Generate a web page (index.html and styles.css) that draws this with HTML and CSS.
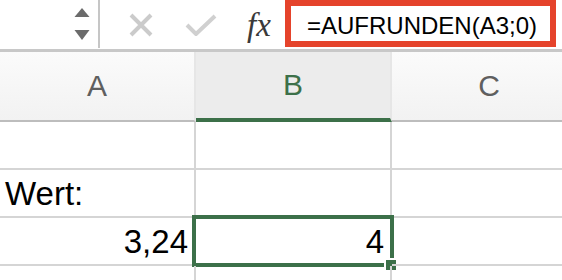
FILE: index.html
```html
<!DOCTYPE html>
<html lang="de">
<head>
    <meta charset="UTF-8">
    <meta name="viewport" content="width=device-width, initial-scale=1.0">
    <title>AUFRUNDEN</title>
    <link rel="stylesheet" href="styles.css">
</head>
<body>
    <div class="toolbar">
        <div class="name-box">
            <svg class="stepper" width="16" height="34" viewBox="0 0 16 34">
                <polygon points="0.5,9 15.5,9 8,0" fill="#6b6b6b"/>
                <polygon points="0.5,22 15.5,22 8,32" fill="#6b6b6b"/>
            </svg>
        </div>
        <div class="formula-tools">
            <svg class="tool-cancel" width="24" height="24" viewBox="0 0 24 24">
                <path d="M2 2 L22 22 M22 2 L2 22" stroke="#cbcbcb" stroke-width="4" fill="none"/>
            </svg>
            <svg class="tool-enter" width="32" height="22" viewBox="0 0 32 22">
                <path d="M2 11 L11 20 L30 2" stroke="#d0d0d0" stroke-width="4" fill="none"/>
            </svg>
            <span class="tool-fx">fx</span>
        </div>
        <div class="formula-input">=AUFRUNDEN(A3;0)</div>
    </div>

    <div class="sheet">
        <div class="col-head">A</div>
        <div class="col-head active">B</div>
        <div class="col-head">C</div>

        <div class="cell"></div>
        <div class="cell"></div>
        <div class="cell"></div>

        <div class="cell">Wert:</div>
        <div class="cell"></div>
        <div class="cell"></div>

        <div class="cell num">3,24</div>
        <div class="cell num selected">4
            <span class="sel-frame"></span>
            <span class="sel-handle"></span>
        </div>
        <div class="cell"></div>

        <div class="cell"></div>
        <div class="cell"></div>
        <div class="cell"></div>
    </div>
</body>
</html>
```

FILE: styles.css
```css
body {
    margin: 0;
    padding: 0;
    font-family: "Liberation Sans", Arial, sans-serif;
    background-color: #fff;
    height: 280px;
    overflow: hidden;
}
.toolbar {
    display: flex;
    height: 49px;
    border-bottom: 3px solid #c8c8c8;
}
.name-box {
    width: 100px;
    border-right: 2px solid #c6c6c6;
    height: 48px;
    display: flex;
    justify-content: flex-end;
    align-items: flex-start;
    box-sizing: border-box;
    padding: 8px 8px 0 0;
}
.formula-tools {
    width: 185px;
    display: flex;
    align-items: center;
}
.tool-cancel {
    margin-left: 29px;
}
.tool-enter {
    margin-left: 32px;
}
.tool-fx {
    margin-left: 30px;
    font-family: "Liberation Serif", "Times New Roman", serif;
    font-style: italic;
    font-size: 33px;
    color: #3a3a3a;
    margin-top: 2px;
}
.formula-input {
    width: 271px;
    height: 47px;
    box-sizing: border-box;
    border: 6px solid #e5432b;
    padding: 5px 0 0 16px;
    font-size: 24px;
    line-height: 30px;
    color: #000;
    white-space: nowrap;
}
.sheet {
    display: grid;
    grid-template-columns: 196px 196px 196px;
    height: 228px;
    overflow: hidden;
}
.col-head {
    height: 70px;
    box-sizing: border-box;
    border-right: 2px solid #e6e6e6;
    border-bottom: 2px solid #bdbdbd;
    background: linear-gradient(#fbfbfb, #f2f2f2);
    color: #5f5f5f;
    font-size: 30px;
    line-height: 68px;
    text-align: center;
}
.col-head.active {
    background: #ececec;
    color: #3c7049;
    border-bottom: 4px solid #3c7049;
    line-height: 66px;
}
.cell {
    position: relative;
    height: 48px;
    box-sizing: border-box;
    border-right: 2px solid #d5d5d5;
    border-bottom: 2px solid #d5d5d5;
    font-size: 33px;
    line-height: 44px;
    padding: 2px 0 0 5px;
    color: #000;
}
.cell.num {
    text-align: right;
    padding-right: 6px;
}
.sel-frame {
    position: absolute;
    top: -3px;
    left: -4px;
    right: -4px;
    bottom: -3px;
    border: 4px solid #3c7049;
}
.sel-handle {
    position: absolute;
    left: 190px;
    top: 42px;
    width: 10px;
    height: 10px;
    background-color: #3c7049;
    box-shadow: 0 0 0 2px #fff;
}
```
